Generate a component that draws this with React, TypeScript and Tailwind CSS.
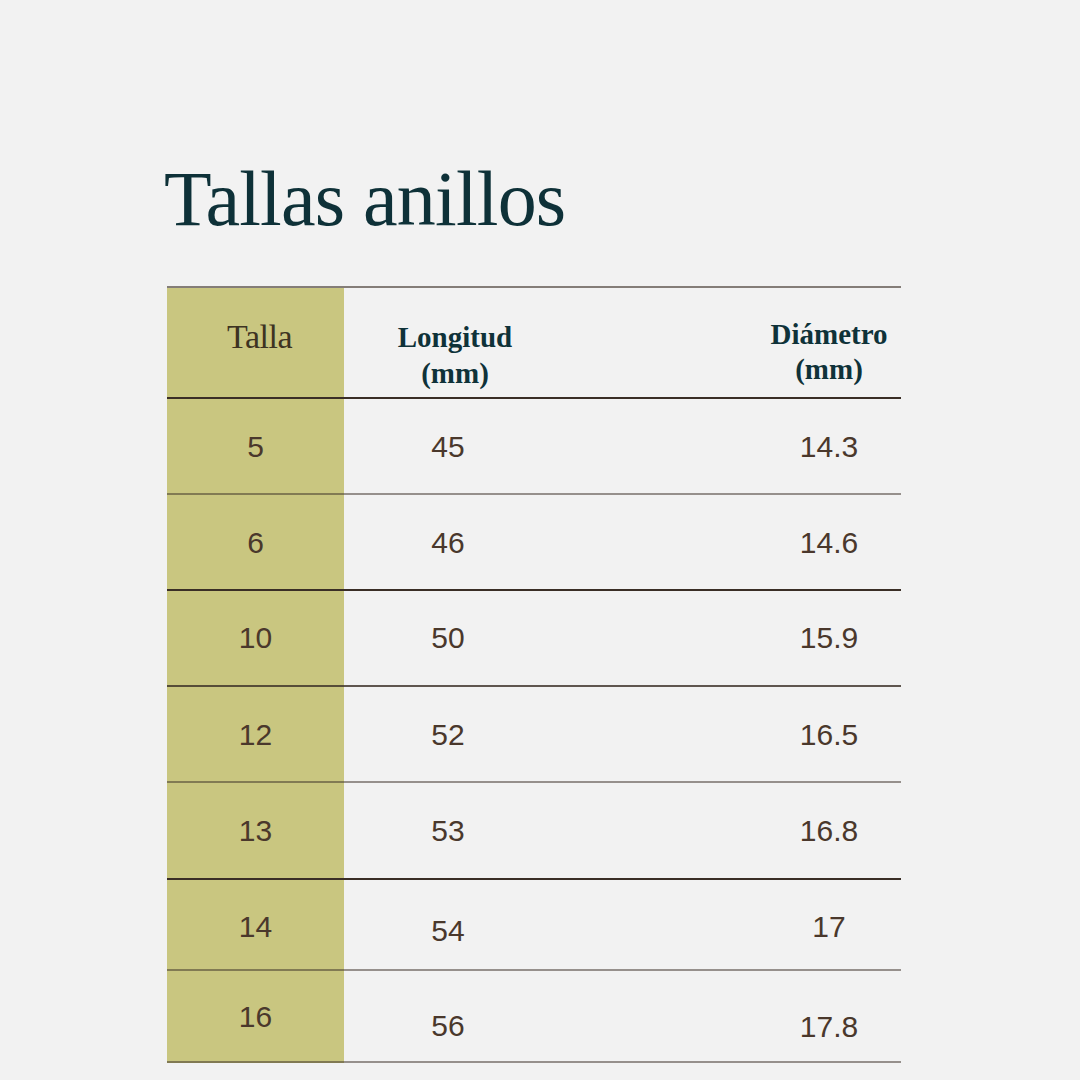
const serif = "font-['Liberation_Serif','Times_New_Roman',serif]";
const sans = "font-['Liberation_Sans',Arial,sans-serif]";

const DARK = 'border-[#3a2e26]';
const SOFT = 'border-[#3a2e26]/50';

interface SizeRow {
  talla: string;
  longitud: string;
  diametro: string;
  height: string;
  line: string;
  shift: [string, string, string];
}

const rows: SizeRow[] = [
  { talla: '5', longitud: '45', diametro: '14.3', height: 'h-[96px]', line: SOFT, shift: ['pt-[2px]', 'pt-[2px]', 'pt-[2px]'] },
  { talla: '6', longitud: '46', diametro: '14.6', height: 'h-[96px]', line: DARK, shift: ['pt-[2px]', 'pt-[2px]', 'pt-[2px]'] },
  { talla: '10', longitud: '50', diametro: '15.9', height: 'h-[96px]', line: 'border-[#3a2e26]/80', shift: ['pt-0', 'pt-0', 'pt-0'] },
  { talla: '12', longitud: '52', diametro: '16.5', height: 'h-[96px]', line: SOFT, shift: ['pt-[2px]', 'pt-[2px]', 'pt-[2px]'] },
  { talla: '13', longitud: '53', diametro: '16.8', height: 'h-[97px]', line: DARK, shift: ['pt-0', 'pt-0', 'pt-0'] },
  { talla: '14', longitud: '54', diametro: '17', height: 'h-[91px]', line: SOFT, shift: ['pt-[4px]', 'pt-[12px]', 'pt-[4px]'] },
  { talla: '16', longitud: '56', diametro: '17.8', height: 'h-[92px]', line: SOFT, shift: ['pt-[2px]', 'pt-[20px]', 'pt-[22px]'] },
];

const Cell = ({ value, className }: { value: string; className: string }) => (
  <div className={`flex items-center justify-center border-b-2 ${className}`}>
    <span className={`${sans} text-[30px] leading-none text-[#4a382c]`}>{value}</span>
  </div>
);

export default function App() {
  return (
    <div className="w-[1080px] h-[1080px] bg-[#f2f2f2] overflow-hidden">
      <div className="pl-[164px] pt-[160px]">
        <h1 className={`${serif} text-[78px] leading-none tracking-[-0.8px] text-[#0e3138]`}>
          Tallas anillos
        </h1>

        <div className="mt-[48px] w-[734px] border-t-2 border-[#3a2e26]/60 ml-[3px]">
          {/* header */}
          <div className="grid grid-cols-[177px_208px_205px_144px] h-[111px]">
            <div className={`bg-[#c9c680] border-b-2 ${DARK} pt-[32px] pl-2 text-center`}>
              <span className={`${serif} text-[34px] leading-[34px] tracking-[-0.5px] text-[#3d3322]`}>
                Talla
              </span>
            </div>
            <div className={`border-b-2 ${DARK} pt-[31px] pl-[14px] text-center`}>
              <p className={`${serif} font-bold text-[29px] leading-[36px] text-[#0f3239]`}>
                Longitud
                <br />
                (mm)
              </p>
            </div>
            <div className={`border-b-2 ${DARK}`} />
            <div className={`border-b-2 ${DARK} pt-[29px] text-center`}>
              <p className={`${serif} font-bold text-[29px] leading-[35px] text-[#0f3239] whitespace-nowrap`}>
                Diámetro
                <br />
                (mm)
              </p>
            </div>
          </div>

          {rows.map((row) => (
            <div
              key={row.talla}
              className={`grid grid-cols-[177px_208px_205px_144px] ${row.height}`}
            >
              <Cell value={row.talla} className={`bg-[#c9c680] ${row.line} ${row.shift[0]}`} />
              <Cell value={row.longitud} className={`${row.line} ${row.shift[1]}`} />
              <div className={`border-b-2 ${row.line}`} />
              <Cell value={row.diametro} className={`${row.line} ${row.shift[2]}`} />
            </div>
          ))}
        </div>
      </div>
    </div>
  );
}
